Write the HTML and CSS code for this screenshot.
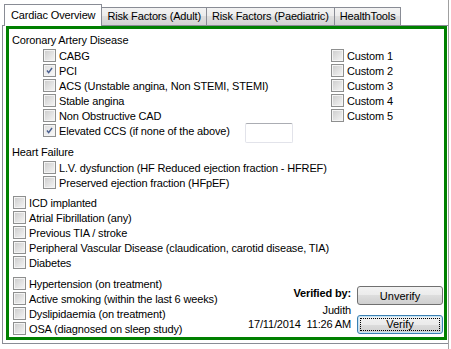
FILE: index.html
```html
<!DOCTYPE html>
<html lang="en">
<head>
  <meta charset="UTF-8">
  <title>Cardiac Overview</title>
  <link rel="stylesheet" href="styles.css">
</head>
<body>
  <div class="window">
    <div class="tabs">
      <div class="tab active">Cardiac Overview</div>
      <div class="tab">Risk Factors (Adult)</div>
      <div class="tab">Risk Factors (Paediatric)</div>
      <div class="tab">HealthTools</div>
    </div>

    <div class="panel">
      <div class="frame">
        <div class="cad">
          <div>
            <div class="heading">Coronary Artery Disease</div>
            <div class="indent">
              <div class="check"><span class="box"></span>CABG</div>
              <div class="check"><span class="box checked"><svg viewBox="0 0 13 13"><path d="M3.5 6.5 L5.5 9 L9.5 3.5"/></svg></span>PCI</div>
              <div class="check"><span class="box"></span>ACS (Unstable angina, Non STEMI, STEMI)</div>
              <div class="check"><span class="box"></span>Stable angina</div>
              <div class="check"><span class="box"></span>Non Obstructive CAD</div>
              <div class="check">
                <span class="box checked"><svg viewBox="0 0 13 13"><path d="M3.5 6.5 L5.5 9 L9.5 3.5"/></svg></span>Elevated CCS (if none of the above)
                <span class="textbox"></span>
              </div>
            </div>
          </div>
          <div class="custom">
            <div class="check"><span class="box"></span>Custom 1</div>
            <div class="check"><span class="box"></span>Custom 2</div>
            <div class="check"><span class="box"></span>Custom 3</div>
            <div class="check"><span class="box"></span>Custom 4</div>
            <div class="check"><span class="box"></span>Custom 5</div>
          </div>
        </div>

        <div class="heading hf">Heart Failure</div>
        <div class="indent">
          <div class="check"><span class="box"></span>L.V. dysfunction (HF Reduced ejection fraction - HFREF)</div>
          <div class="check"><span class="box"></span>Preserved ejection fraction (HFpEF)</div>
        </div>

        <div class="list first">
          <div class="check"><span class="box"></span>ICD implanted</div>
          <div class="check"><span class="box"></span>Atrial Fibrillation (any)</div>
          <div class="check"><span class="box"></span>Previous TIA / stroke</div>
          <div class="check"><span class="box"></span>Peripheral Vascular Disease (claudication, carotid disease, TIA)</div>
          <div class="check"><span class="box"></span>Diabetes</div>
        </div>

        <div class="lower">
          <div class="list">
            <div class="check"><span class="box"></span>Hypertension (on treatment)</div>
            <div class="check"><span class="box"></span>Active smoking (within the last 6 weeks)</div>
            <div class="check"><span class="box"></span>Dyslipidaemia (on treatment)</div>
            <div class="check"><span class="box"></span>OSA (diagnosed on sleep study)</div>
          </div>
          <div class="verify">
            <div class="verify-text">
              <div class="verified-by">Verified by:</div>
              <div>Judith</div>
              <div>17/11/2014&nbsp; 11:26 AM</div>
            </div>
            <div class="verify-buttons">
              <button class="btn">Unverify</button>
              <button class="btn focused"><span>Verify</span></button>
            </div>
          </div>
        </div>
      </div>
    </div>
  </div>
</body>
</html>
```

FILE: styles.css
```css
* {
  box-sizing: border-box;
}
body {
  margin: 0;
  background: #fff;
  color: #000;
  font-family: "Liberation Sans", Arial, sans-serif;
  font-size: 11px;
  letter-spacing: -0.15px;
}
.window {
  width: 449px;
  height: 349px;
  padding: 4px 0 0 2px;
  border-right: 1px solid #a0a0a0;
}

/* tabs */
.tabs {
  display: flex;
  align-items: flex-end;
  height: 21px;
  padding-left: 2px;
}
.tab {
  height: 18px;
  line-height: 17px;
  padding: 0 5px;
  margin-left: -1px;
  border: 1px solid #898c95;
  border-bottom: none;
  background: linear-gradient(#f3f3f3, #ebebeb 50%, #dedede 50%, #d2d2d2);
  white-space: nowrap;
}
.tab.active {
  height: 22px;
  line-height: 20px;
  margin-left: 0;
  margin-bottom: -1px;
  padding: 0 6px;
  background: #fff;
  position: relative;
  z-index: 1;
}

/* tab page */
.panel {
  height: 319px;
  padding: 0 1px 3px 3px;
  border: 1px solid #898c95;
  border-right: none;
}
.frame {
  height: 100%;
  padding: 4px 1px 0 3px;
  border: 3px solid #008000;
}
.heading {
  line-height: 15px;
}
.heading.hf {
  margin-top: 7px;
}
.indent {
  padding-left: 31px;
}
.check {
  display: flex;
  align-items: center;
  height: 15px;
  white-space: nowrap;
}
.box {
  width: 13px;
  height: 13px;
  margin-right: 3px;
  flex: none;
  border: 1px solid #8e8f8f;
  box-shadow: inset 0 0 0 1px #f4f4f4;
  background: linear-gradient(135deg, #cbcbcb, #f6f6f6);
}
.box.checked {
  background: linear-gradient(135deg, #dedede, #fafafa);
}
.box svg {
  display: block;
  width: 11px;
  height: 11px;
}
.box svg path {
  fill: none;
  stroke: #4a5f8f;
  stroke-width: 1.7;
}
.textbox {
  width: 48px;
  height: 20px;
  margin: 0 0 -4px 15px;
  align-self: flex-start;
  border: 1px solid #e2e3ea;
  border-top-color: #abadb3;
  border-radius: 2px;
}
.cad {
  display: grid;
  grid-template-columns: 319px 1fr;
}
.custom {
  padding-top: 15px;
}
.list {
  padding-left: 1px;
}
.list.first {
  margin-top: 5px;
}
.lower {
  display: flex;
  justify-content: space-between;
  align-items: flex-end;
  margin-top: 6px;
}

/* verification */
.verify {
  display: flex;
  gap: 6px;
  margin-bottom: 2px;
}
.verify-text {
  text-align: right;
  line-height: 14px;
}
.verified-by {
  font-weight: bold;
  margin-bottom: 3px;
}
.verify-buttons {
  display: flex;
  flex-direction: column;
  gap: 10px;
}
.btn {
  width: 86px;
  height: 19px;
  padding: 0;
  border: 1px solid #707070;
  border-radius: 3px;
  background: linear-gradient(#f2f2f2, #ebebeb 50%, #dddddd 50%, #cfcfcf);
  font: inherit;
  color: #000;
}
.btn.focused {
  border-color: #3c7fb1;
  box-shadow: inset 0 0 0 1px #c4e5f6;
}
.btn.focused span {
  display: block;
  margin: 2px;
  height: 13px;
  line-height: 11px;
  border: 1px dotted #000;
}
```
